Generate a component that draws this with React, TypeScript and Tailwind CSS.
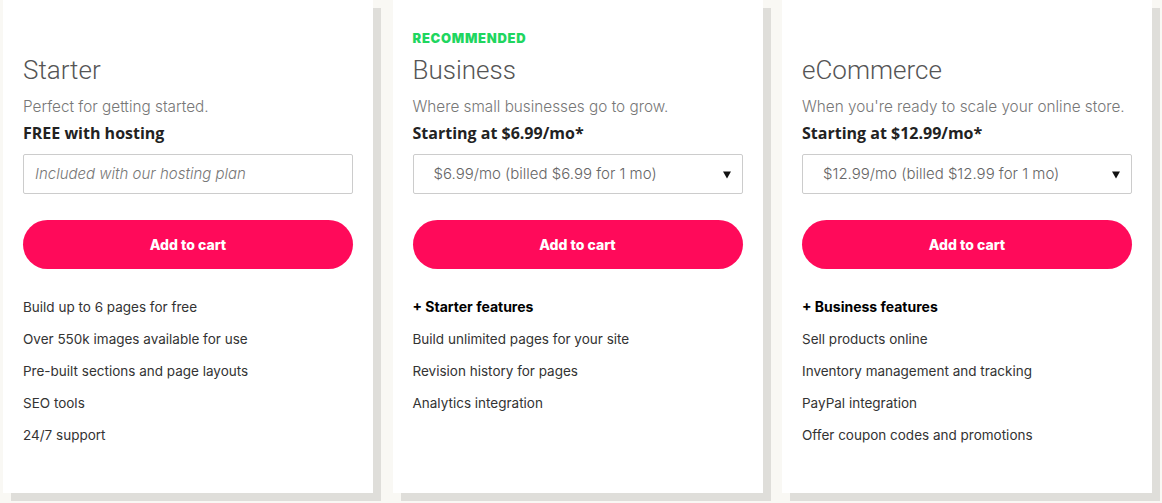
import React from "react";

type Plan = {
  recommended?: boolean;
  name: string;
  desc: string;
  price: string;
  field: string;
  select: boolean;
  header?: string;
  features: string[];
};

const plans: Plan[] = [
  {
    name: "Starter",
    desc: "Perfect for getting started.",
    price: "FREE with hosting",
    field: "Included with our hosting plan",
    select: false,
    features: [
      "Build up to 6 pages for free",
      "Over 550k images available for use",
      "Pre-built sections and page layouts",
      "SEO tools",
      "24/7 support",
    ],
  },
  {
    recommended: true,
    name: "Business",
    desc: "Where small businesses go to grow.",
    price: "Starting at $6.99/mo*",
    field: "$6.99/mo (billed $6.99 for 1 mo)",
    select: true,
    header: "+ Starter features",
    features: [
      "Build unlimited pages for your site",
      "Revision history for pages",
      "Analytics integration",
    ],
  },
  {
    name: "eCommerce",
    desc: "When you're ready to scale your online store.",
    price: "Starting at $12.99/mo*",
    field: "$12.99/mo (billed $12.99 for 1 mo)",
    select: true,
    header: "+ Business features",
    features: [
      "Sell products online",
      "Inventory management and tracking",
      "PayPal integration",
      "Offer coupon codes and promotions",
    ],
  },
];

function Card({ p }: { p: Plan }) {
  return (
    <div className="h-[493px] bg-white shadow-[8px_8px_0_0_#dfdeda] px-[20px] pt-[30px]">
      <div className="h-[17px] text-[13px] leading-[17px] font-black tracking-[0.7px] text-[#1fd65f] font-['Inter',sans-serif]">
        {p.recommended ? "RECOMMENDED" : ""}
      </div>
      <div className="mt-[6px] text-[26px] leading-[34px] font-light text-[#555] font-['Roboto',sans-serif]">
        {p.name}
      </div>
      <div className="mt-[10px] text-[15.3px] leading-[20px] font-light text-[#777] font-['Inter',sans-serif]">
        {p.desc}
      </div>
      <div className="mt-[5px] text-[16px] leading-[22px] font-bold text-[#222] font-['Open_Sans',sans-serif]">
        {p.price}
      </div>
      <div className="mt-[10px] h-[40px] border border-[#cccccc] rounded-[2px] flex items-center justify-between font-['Inter',sans-serif]">
        {p.select ? (
          <>
            <span className="pl-[20px] text-[15px] font-light text-[#666]">{p.field}</span>
            <svg width="10" height="9" viewBox="0 0 10 9" className="mr-[10px]">
              <path d="M1 1.5h8L5 8.5z" fill="#111" />
            </svg>
          </>
        ) : (
          <span className="pl-[11px] text-[15px] font-light italic text-[#777]">{p.field}</span>
        )}
      </div>
      <button className="mt-[26px] w-full h-[49px] rounded-full bg-[#ff0a5a] text-white text-[14px] font-extrabold font-['Inter',sans-serif]">
        Add to cart
      </button>
      <ul className="mt-[22px] flex flex-col font-['Inter',sans-serif] text-[13.5px] text-[#333]">
        {p.header && (
          <li className="h-[32px] leading-[32px] text-[14px] font-bold text-black">{p.header}</li>
        )}
        {p.features.map((f) => (
          <li key={f} className="h-[32px] leading-[32px]">
            {f}
          </li>
        ))}
      </ul>
    </div>
  );
}

export default function App() {
  return (
    <div className="w-[1162px] h-[503px] bg-[#f9f8f4] overflow-hidden">
      <div className="grid grid-cols-[370px_370px_370px] gap-x-[19.5px] pl-[3px]">
        {plans.map((p) => (
          <Card key={p.name} p={p} />
        ))}
      </div>
    </div>
  );
}
